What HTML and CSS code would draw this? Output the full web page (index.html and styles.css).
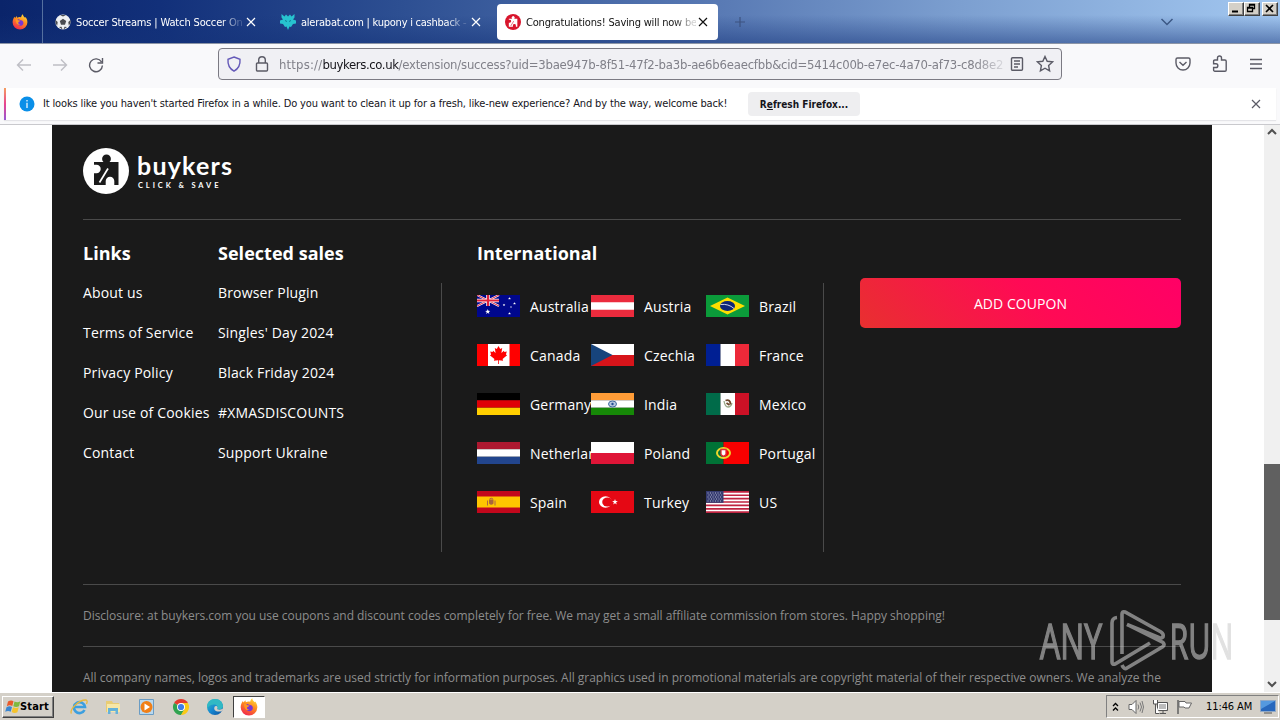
FILE: index.html
```html
<!DOCTYPE html>
<html lang="en">
<head>
<meta charset="utf-8">
<title>Congratulations! Saving will now be easier</title>
<link rel="stylesheet" href="styles.css">
</head>
<body>
<svg width="0" height="0" class="defs">
  <defs>
    <linearGradient id="fox" x1="0.8" y1="0" x2="0.3" y2="1"><stop offset="0" stop-color="#ffe03a"/><stop offset=".45" stop-color="#ff8a1e"/><stop offset="1" stop-color="#f0254f"/></linearGradient>
    <linearGradient id="edge" x1="0" y1="0" x2="1" y2="1"><stop offset="0" stop-color="#39c6b4"/><stop offset=".5" stop-color="#1688d2"/><stop offset="1" stop-color="#0c4f9c"/></linearGradient>
    <symbol id="firefox" viewBox="0 0 16 16">
      <path d="M8 15.6A7.3 7.3 0 0 1 .6 8.3C.6 6 1.5 4 2.6 2.7l.5 1.4L4.8 2l.4 1.8C6.600 2.900 8 2.900 9 3.400 9.300 2 9.900 1 10.900.300c.1 1.700 1 2.400 2.200 3.500l.4-.8c1.300 1.600 2 3.400 1.900 5.500A7.400 7.400 0 0 1 8 15.600z" fill="url(#fox)"/>
      <path d="M5.200 5.800c1-.7 2-.5 2.800.1l2 .5c1.700 1 1.900 3.300.6 4.500-1.500 1.400-4.300 1-5.300-.8-.8-1.300-.8-3-.1-4.300z" fill="#7a35d5"/>
      <path d="M3.500 5.500c1.200-.5 2.500.1 3.200.9l1.700.2c-.2 1-1.500 1-2.100 1.600-.3 1.400.7 2.200 2.100 2-2 1.600-4.600.2-4.900-4.700z" fill="#ff9822"/>
    </symbol>
    <symbol id="cross" viewBox="0 0 10 10"><path d="M1 1l8 8M9 1L1 9" fill="none" stroke="currentColor" stroke-width="1.200"/></symbol>
    <symbol id="star" viewBox="-5 -5 10 10"><path d="M0-5L1.200-1.600 4.800-1.500 1.900.600 2.900 4 0 2-2.900 4-1.900.600-4.800-1.500-1.200-1.600z"/></symbol>
    <symbol id="puzzle" viewBox="0 0 46 46">
      <path d="M11 14h9.500a4.400 4.400 0 1 1 6 0H35.500V37h-4.200v-4a4.300 4.300 0 0 0-8.600 0v4H11V25.200h2.500a4.200 4.200 0 1 0 0-8.400H11z" fill="var(--ink)"/>
      <path d="M16.500 34.500L25 20.500" stroke="var(--paper)" stroke-width="1.700"/>
    </symbol>
  </defs>
</svg>
<div class="screen">
  <header class="tabs">
    <div class="home"><svg width="16" height="16"><use href="#firefox"/></svg></div>
    <div class="tab">
      <svg class="fav" width="16" height="16" viewBox="0 0 16 16"><circle cx="8" cy="8" r="7.600" fill="#eef0f2"/><path d="M8 4.800l3.200 2.300L10 10.700H6L4.800 7.100zM5 .900L8 2.600 11 .900zM.500 6l2.200 2-.5 3.500C.500 10 .300 8 .500 6zM15.500 6l-2.200 2 .5 3.500c1.700-1.500 1.900-3.500 1.700-5.500zM4 13l2.500-.3L7.500 15.500zM12 13l-2.500-.3L8.500 15.500z" fill="#4a4c50"/></svg>
      <span class="title">Soccer Streams | Watch Soccer On</span>
      <svg class="x" width="10" height="10"><use href="#cross"/></svg>
    </div>
    <div class="tab">
      <svg class="fav" width="16" height="16" viewBox="0 0 16 16"><path d="M1.500 0l3 2.500L6 .500 8 2.500l2-2 1.500 2 3-2.500v3.500L13 5.500l3 1v3l-3 .5-2 3-1.500-.5L8 16l-1.500-3.500L5 13l-2-3-3-.5v-3l3-1-1.500-2z" fill="#27c3cf"/><path d="M5 6.500l2 1M11 6.500l-2 1" stroke="#0e7f96"/></svg>
      <span class="title t2">alerabat.com | kupony i cashback -</span>
      <svg class="x" width="10" height="10"><use href="#cross"/></svg>
    </div>
    <div class="tab active">
      <svg class="fav brand" width="16" height="16" viewBox="0 0 46 46"><circle cx="23" cy="23" r="23" fill="#d8152c"/><use href="#puzzle" width="46" height="46"/></svg>
      <span class="title t3">Congratulations! Saving will now be</span>
      <svg class="x" width="10" height="10"><use href="#cross"/></svg>
    </div>
    <svg class="plus" width="12" height="12" viewBox="0 0 12 12"><path d="M6 1v10M1 6h10" stroke="#3d5380" stroke-width="1.200"/></svg>
    <svg class="chev" width="14" height="8" viewBox="0 0 14 8"><path d="M1.500 1L7 6.500 12.500 1" fill="none" stroke="#3c5885" stroke-width="1.500"/></svg>
    <div class="winbtns">
      <i><svg width="13" height="11" viewBox="0 0 13 11"><path d="M3 8.500h6" stroke="#000" stroke-width="2"/></svg></i>
      <i><svg width="13" height="11" viewBox="0 0 13 11"><path d="M4.500 4V1.500h5v4H8M4 2h6M2.500 4.500h5v4h-5zM2 5h6" fill="none" stroke="#000" stroke-width="1.300"/></svg></i>
      <i class="gap"><svg width="13" height="11" viewBox="0 0 13 11"><path d="M3 2l7 7M10 2L3 9" stroke="#000" stroke-width="1.600"/></svg></i>
    </div>
  </header>
  <nav class="toolbar">
    <div class="navbtns">
      <svg width="16" height="16" viewBox="0 0 16 16" class="dim"><path d="M15 8H1.500M7 2.500L1.500 8 7 13.500"/></svg>
      <svg width="16" height="16" viewBox="0 0 16 16" class="dim"><path d="M1 8h13.500M9 2.500L14.500 8 9 13.500"/></svg>
      <svg width="16" height="16" viewBox="0 0 16 16"><path d="M13.500 5A6.400 6.400 0 1 0 14.400 8.500M14.500 1v5H9.500"/></svg>
    </div>
    <div class="urlbar">
      <svg width="16" height="16" viewBox="0 0 16 16" class="shield"><path d="M8 1L14 3.300C14.500 9 12 13 8 15.200 4 13 1.500 9 2 3.300z"/></svg>
      <svg width="14" height="16" viewBox="0 0 14 16" class="lock"><path d="M2.500 7h9a1 1 0 0 1 1 1v6a1 1 0 0 1-1 1h-9a1 1 0 0 1-1-1V8a1 1 0 0 1 1-1zM3.700 7V4a3.300 3.300 0 0 1 6.600 0v3"/></svg>
      <span class="url"><span class="u1">https://</span><b>buykers.co.uk</b><span class="u2">/extension/success?uid=3bae947b-8f51-47f2-ba3b-ae6b6eaecfbb&amp;cid=5414c00b-e7ec-4a70-af73-c8d8e2</span></span>
      <svg width="14" height="16" viewBox="0 0 14 16" class="reader"><path d="M2.500 1.700h9a1 1 0 0 1 1 1v10.600a1 1 0 0 1-1 1h-9a1 1 0 0 1-1-1V2.700a1 1 0 0 1 1-1zM4 5h6M4 8h6M4 11h4"/></svg>
      <svg width="18" height="18" viewBox="0 0 18 18" class="fave"><path d="M9 1.500l2.200 4.800 5.300.6-3.900 3.600 1 5.300L9 13.200l-4.600 2.600 1-5.300L1.500 6.900l5.300-.6z"/></svg>
    </div>
    <div class="actions">
      <svg width="16" height="16" viewBox="0 0 16 16"><path d="M2.500 2h11a1.500 1.500 0 0 1 1.500 1.500V7A7 7 0 0 1 1 7V3.500A1.500 1.500 0 0 1 2.500 2zM4.500 6L8 9.300 11.500 6"/></svg>
      <svg width="16" height="18" viewBox="0 0 16 18"><path d="M5.500 5V3a2 2 0 0 1 4 0v2H13a1.200 1.200 0 0 1 1.200 1.200V15a1.200 1.200 0 0 1-1.200 1.200H2.800A1.200 1.200 0 0 1 1.600 15v-2.500H4a1.800 1.800 0 0 0 0-3.700H1.600V6.200A1.200 1.200 0 0 1 2.800 5z"/></svg>
      <svg width="14" height="14" viewBox="0 0 14 14"><path d="M1 2.500h12M1 7h12M1 11.500h12"/></svg>
    </div>
  </nav>
  <div class="notice">
    <div class="card">
      <svg width="16" height="16" viewBox="0 0 16 16"><circle cx="8" cy="8" r="7.500" fill="#0a8fe8"/><path d="M8 6.800V12M8 4v1.500" stroke="#fff" stroke-width="1.200"/></svg>
      <span class="msg">It looks like you haven't started Firefox in a while. Do you want to clean it up for a fresh, like-new experience? And by the way, welcome back!</span>
      <button><span>R<u>e</u>fresh Firefox...</span></button>
      <svg class="x" width="10" height="10"><use href="#cross"/></svg>
    </div>
  </div>
  <main>
    <div class="footer">
      <div class="logo">
        <svg width="46" height="46" viewBox="0 0 46 46"><circle cx="23" cy="23" r="23" fill="#fff"/><use href="#puzzle" width="46" height="46"/></svg>
        <div><strong>buykers</strong><small>CLICK &amp; SAVE</small></div>
      </div>
      <div class="columns">
        <section class="left">
          <div class="links"><h3>Links</h3><a>About us</a><a>Terms of Service</a><a>Privacy Policy</a><a>Our use of Cookies</a><a>Contact</a></div>
          <div class="links"><h3>Selected sales</h3><a>Browser Plugin</a><a>Singles' Day 2024</a><a>Black Friday 2024</a><a>#XMASDISCOUNTS</a><a>Support Ukraine</a></div>
        </section>
        <section class="intl">
          <h3>International</h3>
          <div class="flags">
            <a><svg viewBox="0 0 43 22"><path fill="#00078c" d="M0 0h43v22H0z"/><path d="M0 0l22 11M22 0L0 11" stroke="#fff" stroke-width="2"/><path d="M0 0l22 11M22 0L0 11" stroke="#e2213d"/><path d="M11 0v11M0 5.500h22" stroke="#fff" stroke-width="3.600"/><path d="M11 0v11M0 5.500h22" stroke="#e2213d" stroke-width="2.200"/><g fill="#fff"><use href="#star" x="8" y="14" width="5.500" height="5.500"/><use href="#star" x="31" y="2" width="3" height="3"/><use href="#star" x="25.500" y="8.500" width="3" height="3"/><use href="#star" x="36" y="7" width="3" height="3"/><use href="#star" x="31" y="17" width="3" height="3"/><circle cx="34" cy="12" r=".7"/></g></svg>Australia</a>
            <a><svg viewBox="0 0 43 22"><path fill="#eb2b3d" d="M0 0h43v22H0z"/><path fill="#fff" d="M0 7.300h43v7.400H0z"/></svg>Austria</a>
            <a><svg viewBox="0 0 43 22"><path fill="#0b9b3a" d="M0 0h43v22H0z"/><path fill="#fedf00" d="M21.500 2.500L39 11 21.500 19.500 4 11z"/><ellipse cx="21.500" cy="11" rx="7.500" ry="5" fill="#0c2678"/><path d="M14.500 9.500q8-1 13.500 4" fill="none" stroke="#fff" stroke-width=".8"/></svg>Brazil</a>
            <a><svg viewBox="0 0 43 22"><path fill="#f00" d="M0 0h43v22H0z"/><path fill="#fff" d="M11 0h21.500v22H11z"/><path fill="#f00" d="M21.500 2l1.700 3 2-1-.8 5 2.500-2.300.5 1.300 2.400-.4-.9 2.900 1.200.7-4.500 3.700.5 1.900-4.200-.6V20h-.8v-3.800l-4.200.6.500-1.900-4.500-3.700 1.200-.7-.9-2.900 2.400.4.500-1.300L18.600 9l-.8-5 2 1z"/></svg>Canada</a>
            <a><svg viewBox="0 0 43 22"><path fill="#fff" d="M0 0h43v11H0z"/><path fill="#d7141a" d="M0 11h43v11H0z"/><path fill="#17447c" d="M0 0l21.500 11L0 22z"/></svg>Czechia</a>
            <a><svg viewBox="0 0 43 22"><path fill="#001f93" d="M0 0h14.500v22H0z"/><path fill="#fff" d="M14.500 0H29v22H14.500z"/><path fill="#ed2939" d="M29 0h14v22H29z"/></svg>France</a>
            <a><svg viewBox="0 0 43 22"><path fill="#000" d="M0 0h43v7.300H0z"/><path fill="#df0007" d="M0 7.300h43v7.400H0z"/><path fill="#ffcf00" d="M0 14.700h43V22H0z"/></svg>Germany</a>
            <a><svg viewBox="0 0 43 22"><path fill="#ff9c37" d="M0 0h43v7.300H0z"/><path fill="#fff" d="M0 7.300h43v7.400H0z"/><path fill="#168807" d="M0 14.700h43V22H0z"/><ellipse cx="21.500" cy="11" rx="4" ry="3" fill="#b6c7df" stroke="#426ca1"/><circle cx="21.500" cy="11" r="1.200" fill="#224f91"/></svg>India</a>
            <a><svg viewBox="0 0 43 22"><path fill="#006b49" d="M0 0h14.500v22H0z"/><path fill="#fff" d="M14.500 0H29v22H14.500z"/><path fill="#cc1126" d="M29 0h14v22H29z"/><path d="M18 8q1 6 4 6t4-4" fill="none" stroke="#9aa888" stroke-width="1.300"/><path d="M19.500 7.500q5-1.500 5 4M20.500 10l3 2" fill="none" stroke="#6e492d" stroke-width="1.800"/></svg>Mexico</a>
            <a><svg viewBox="0 0 43 22"><path fill="#ad1830" d="M0 0h43v7.300H0z"/><path fill="#fff" d="M0 7.300h43v7.400H0z"/><path fill="#22458d" d="M0 14.700h43V22H0z"/></svg>Netherlands</a>
            <a><svg viewBox="0 0 43 22"><path fill="#fff" d="M0 0h43v11H0z"/><path fill="#df1537" d="M0 11h43v11H0z"/></svg>Poland</a>
            <a><svg viewBox="0 0 43 22"><path fill="#007236" d="M0 0h17.500v22H0z"/><path fill="#f80000" d="M17.500 0H43v22H17.500z"/><ellipse cx="17.500" cy="11" rx="6.500" ry="5" fill="none" stroke="#e9d62b" stroke-width="2"/><path d="M15 7.500h5v5q-2.500 3.500-5 0z" fill="#fff" stroke="#e02a35" stroke-width="1.300"/></svg>Portugal</a>
            <a><svg viewBox="0 0 43 22"><path fill="#c2071c" d="M0 0h43v22H0z"/><path fill="#ffc500" d="M0 5.500h43v11H0z"/><path fill="#a9643c" d="M12 8.500h4.500v4q-2.300 2.500-4.500 0z"/><path d="M10.500 9.500v5M18 9.500v5M12.500 8q1.800-1.500 3.500 0" fill="none" stroke="#ad6546"/></svg>Spain</a>
            <a><svg viewBox="0 0 43 22"><path fill="#e50814" d="M0 0h43v22H0z"/><ellipse cx="14.500" cy="11" rx="6.500" ry="5.700" fill="#fff"/><ellipse cx="16.500" cy="11" rx="5.300" ry="4.500" fill="#e50814"/><use href="#star" x="21" y="8" width="6" height="6" fill="#fff"/></svg>Turkey</a>
            <a><svg viewBox="0 0 43 22"><path fill="#fff" d="M0 0h43v22H0z"/><path d="M0 .850h43M0 4.230h43M0 7.610h43M0 11h43M0 14.400h43M0 17.800h43M0 21.150h43" stroke="#bf2340" stroke-width="1.700"/><path fill="#353b70" d="M0 0h17.500v11.850H0z"/><path d="M1.500 2h15M2.500 4h13M1.500 6h15M2.500 8h13M1.500 10h15" stroke="#c1c3d7" stroke-width=".9" stroke-dasharray="1 1.500"/></svg>US</a>
          </div>
        </section>
        <section class="cta"><a>ADD COUPON</a></section>
      </div>
      <p class="disc">Disclosure: at buykers.com you use coupons and discount codes completely for free. We may get a small affiliate commission from stores. Happy shopping!</p>
      <p class="legal">All company names, logos and trademarks are used strictly for information purposes. All graphics used in promotional materials are copyright material of their respective owners. We analyze the</p>
    </div>
    <div class="scroll">
      <svg width="10" height="8" viewBox="0 0 10 8"><path d="M1 6l4-4 4 4" fill="none" stroke="#505050" stroke-width="2"/></svg>
      <i></i>
      <svg width="10" height="8" viewBox="0 0 10 8"><path d="M1 2l4 4 4-4" fill="none" stroke="#505050" stroke-width="2"/></svg>
    </div>
  </main>
  <footer class="taskbar">
    <div class="start"><svg width="17" height="16" viewBox="0 0 17 16"><path d="M3 2.500q3-2 5.500-.3L7.300 7q-2.500-1.500-5.500.2z" fill="#e95a2b"/><path d="M9.500 2.500q3 1.500 5.800-.2L14 7.200q-3 1.500-5.700 0z" fill="#7fb83f"/><path d="M1.500 8.200q3-1.700 5.500-.2l-1.300 4.700q-2.500-1.500-5.500 0z" fill="#3a86d1"/><path d="M8 8.300q3 1.500 5.700 0l-1.300 4.900q-3 1.500-5.700-.2z" fill="#f5c32c"/></svg><b>Start</b></div>
    <div class="apps">
      <svg width="18" height="18" viewBox="0 0 18 18"><path d="M14.500 12A5.500 5.500 0 1 1 15 9H5" fill="none" stroke="#3c9fdf" stroke-width="2.600"/><path d="M1.500 15.500C-1 12 9 1.500 16 2q2 .5.500 4" fill="none" stroke="#e8b83b" stroke-width="1.300"/></svg>
      <svg width="18" height="18" viewBox="0 0 18 18"><path d="M2 3h6l1 2h6v9H2z" fill="#e8cc74"/><path d="M3 6h13v8H3z" fill="#f7e7a6"/><path d="M4 10h10v6h-2.500v-3h-5v3H4z" fill="#65b2d9"/></svg>
      <svg width="18" height="18" viewBox="0 0 18 18"><path fill="#b9d8ee" stroke="#6a9cc4" d="M1.500 1.500h14v15h-14z"/><circle cx="8.500" cy="9" r="6" fill="#f07f17"/><path d="M6.500 5.500L12 9l-5.500 3.500z" fill="#fff"/></svg>
      <svg width="18" height="18" viewBox="0 0 18 18"><path d="M9 9L2.070 5A8 8 0 0 1 15.930 5z" fill="#e33b2e"/><path d="M9 9L2.070 5A8 8 0 0 0 9 17l4-6z" fill="#31a350"/><path d="M9 5h6.930A8 8 0 0 1 9 17l3.500-6z" fill="#fbc916"/><circle cx="9" cy="9" r="4" fill="#fff"/><circle cx="9" cy="9" r="3.100" fill="#3f7de8"/></svg>
      <svg width="18" height="18" viewBox="0 0 18 18"><circle cx="9" cy="9" r="8" fill="url(#edge)"/><path d="M17 8.500c0 3-4.500 3.700-6 2.500 1.500-2 0-4.500-3-4.500-3 0-5.500 1.800-6.900 3.500C.500 4 5 1 9 1c5 0 8 3.500 8 7.500z" fill="#31b9c4"/><path d="M8.500 9c-1.200 3 1.500 5.500 7 4.300l1.500-1.800v-1c-1.500 1.300-4.500 1.500-6 .5 1-1.500.5-2.500-.5-3-1 0-1.700.3-2 1z" fill="#d4d0c8"/></svg>
      <div class="running"><svg width="18" height="18"><use href="#firefox"/></svg></div>
    </div>
    <div class="tray">
      <svg width="7" height="10" viewBox="0 0 7 10"><path d="M1 4l2.500-2.500L6 4M1 8.500L3.500 6 6 8.500" fill="none" stroke="#000" stroke-width="1.300"/></svg>
      <svg width="16" height="16" viewBox="0 0 16 16"><path d="M1 5.500h3L8 1.500v13l-4-4H1z" fill="#fff" stroke="#666"/><path d="M10 5.500q1.500 2.500 0 5M12 3.500q3 4.500 0 9M14 2q3 6 0 12" fill="none" stroke="#777"/></svg>
      <svg width="16" height="16" viewBox="0 0 16 16"><path d="M5.500 3.500h10v8h-10zM8 14.500h6M11 11.500v3" fill="#bbb" stroke="#555"/><path d="M6.500 4.500h8v6h-8z" fill="none" stroke="#fff"/><path d="M1.500 1v4h4V1M3.500 5v9.500h4" fill="#fff" stroke="#555"/></svg>
      <svg width="16" height="16" viewBox="0 0 16 16"><path d="M2 1v14" stroke="#666" stroke-width="1.600"/><path d="M3 2.500h6l1 1.500h5.500L13 9H9L8 8H3z" fill="#fff" stroke="#666"/></svg>
      <span>11:46 AM</span>
      <svg class="desk" width="16" height="14" viewBox="0 0 16 14"><path fill="#2868bd" stroke="#90a9c7" d="M.5.500h15v11H.500z"/><path d="M1 1h14L1 9z" fill="#5599df"/><path d="M4 13h8" stroke="#555"/></svg>
    </div>
  </footer>
  <svg class="watermark" width="200" height="70" viewBox="0 0 200 70">
    <text x="3" y="54.500" textLength="62" lengthAdjust="spacingAndGlyphs">ANY</text>
    <text x="132.500" y="54.500" textLength="64" lengthAdjust="spacingAndGlyphs">RUN</text>
    <path d="M80 13.500Q75 14 75 19v39q0 3 3 2l35-21M85 50V10q0-3 3-2l36 20q3 2 2 5-2 2-5 0L90 20.500l36 18q2 2 0 4L90 64q-3 2-5-3"/>
  </svg>
</div>
</body>
</html>
```
FILE: styles.css
```css
* { box-sizing: border-box; }
body { margin: 0; font-family: "DejaVu Sans Condensed", "DejaVu Sans", sans-serif; font-size: 11px; color: #15141a; }
.defs { position: absolute; }
svg { display: block; flex: none; }
.screen { position: relative; width: 1280px; height: 720px; display: flex; flex-direction: column; overflow: hidden; background: #fff; }

.tabs { height: 44px; flex: none; display: flex; align-items: center; color: #fff; border-bottom: 1px solid #8c95a6; background: linear-gradient(180deg, rgba(20,50,120,0) 35%, rgba(20,50,120,.5) 100%), linear-gradient(90deg, #0a246a 0, #12307a 160px, #2d4f92 400px, #5677b2 700px, #7c9fd0 960px, #a2c7f0 1280px); }
.home { width: 43px; height: 43px; padding: 14px 0 0 12px; border-right: 1px solid #55709f; }
.tab { width: 221px; height: 36px; margin: 0 2px; padding: 0 10px; display: flex; align-items: center; }
.tab .x { margin-left: 3px; }
.fav { margin-right: 5px; }
.title { width: 170px; white-space: nowrap; padding-top: 2px; letter-spacing: -.15px; mask-image: linear-gradient(90deg, #000 87%, rgba(0,0,0,.2) 98%); }
.t2 { letter-spacing: -.24px; }
.t3 { letter-spacing: -.2px; }
.tab.active { margin-left: 4px; padding-left: 8px; background: #fff; color: #111; border-radius: 4px; }
.tab.active .x { margin-left: 2px; }
.brand { --ink: #fff; --paper: #d8152c; }
.plus { margin-left: 14px; }
.chev { margin-left: 414px; }
.winbtns { align-self: flex-start; margin: 2px 2px 0 auto; display: flex; }
.winbtns i { width: 16px; height: 14px; background: #d4d0c8; border: 1px solid; border-color: #fff #404040 #404040 #fff; box-shadow: inset -1px -1px #808080; }
.winbtns .gap { margin-left: 2px; }

.toolbar { height: 44px; flex: none; padding: 4px 17px 0 16px; display: flex; align-items: flex-start; background: #f9f9fb; }
.toolbar svg { fill: none; stroke: #5b5b66; stroke-width: 1.4; }
.navbtns { display: flex; gap: 20px; padding-top: 9px; width: 202px; }
.toolbar .dim { stroke: #bfbfc5; }
.urlbar { width: 844px; height: 32px; border: 1px solid #7b7a83; border-radius: 4px; background: #f0f0f4; display: flex; align-items: center; padding: 0 7px; }
.toolbar .shield { stroke: #6459b8; }
.lock { margin-left: 13px; }
.url { width: 726px; margin-left: 10px; display: block; white-space: nowrap; font-size: 13px; color: #808089; mask-image: linear-gradient(90deg, #000 96%, rgba(0,0,0,.2) 100%); }
.url b { font-weight: 400; color: #15141a; letter-spacing: -.38px; }
.u1 { letter-spacing: .18px; }
.u2 { letter-spacing: -.22px; }
.reader { margin-left: 7px; }
.fave { margin-left: 12px; }
.actions { display: flex; align-items: center; gap: 21px; margin-left: auto; padding-top: 7px; }

.notice { height: 37px; flex: none; padding: 0 4px; background: #f9f9fb; border-bottom: 1px solid #c9c9cd; }
.card { height: 32px; display: flex; align-items: center; padding: 0 15px 0 13px; background: #fff; border-left: 2px solid; border-image: linear-gradient(#f6a45c, #e8438f, #9059d8) 1; box-shadow: 0 1px 1px #e4e4e8; }
.msg { width: 686px; margin-left: 8px; padding-bottom: 2px; white-space: nowrap; letter-spacing: -.144px; }
.card button { width: 112px; height: 24px; margin-left: 19px; padding: 0; border: 0; border-radius: 4px; background: #eeeef0; font: bold 10px "DejaVu Sans Condensed", sans-serif; color: #15141a; }
.card .x { margin-left: auto; color: #5b5b66; }

main { flex: 1; min-height: 0; display: flex; background: #fff; }
.footer { width: 1160px; margin-left: 52px; padding: 23px 31px 0; overflow: hidden; background: #1a1a1a; color: #fff; font-family: "Open Sans", sans-serif; font-size: 14px; letter-spacing: .17px; }
.logo { height: 71px; display: flex; --ink: #1a1a1a; --paper: #fff; }
.logo div { padding: 2px 0 0 8px; }
.logo strong { display: block; font: 700 25px/30px Lato, sans-serif; letter-spacing: 1.200px; }
.logo small { display: block; font: 700 7.500px/9px Lato, sans-serif; letter-spacing: 2.900px; padding: 1px 0 0 1px; }
.columns { height: 365px; display: flex; border-top: 1px solid #4a4a4a; }
h3 { margin: 0; font-size: 18px; line-height: 24px; font-weight: 700; letter-spacing: .03px; }
.left { width: 358px; padding-top: 21px; display: flex; }
.links { width: 135px; display: flex; flex-direction: column; white-space: nowrap; }
.links a { line-height: 20px; margin-bottom: 20px; }
.links h3 { margin-bottom: 18px; }
.intl { width: 383px; padding: 21px 0 0 36px; background: linear-gradient(#4a4a4a, #4a4a4a) 0 63px / 1px 269px no-repeat, linear-gradient(#4a4a4a, #4a4a4a) 100% 63px / 1px 269px no-repeat; }
.flags { display: grid; grid-template-columns: 114px 115px 114px; grid-auto-rows: 22px; row-gap: 27px; padding-top: 30px; }
.flags a { display: flex; align-items: flex-start; line-height: 24px; white-space: nowrap; }
.flags a:nth-child(10) { overflow: hidden; }
.flags svg { width: 43px; height: 22px; margin-right: 10px; }
.cta { flex: 1; padding: 58px 0 0 36px; }
.cta a { display: flex; align-items: center; justify-content: center; height: 50px; border-radius: 5px; font-weight: 500; letter-spacing: .05px; background: linear-gradient(45deg, #e8302f 0, #ff0a55 55%, #ff0066 100%); }
p { margin: 0; font-size: 12px; line-height: 20px; color: #8d8d8d; border-top: 1px solid #4a4a4a; padding-top: 21px; height: 62px; white-space: nowrap; }
.disc { letter-spacing: -.03px; }
.legal { letter-spacing: -.014px; }

.scroll { width: 16px; margin-left: 52px; background: #f0f0f0; display: flex; flex-direction: column; align-items: center; padding: 3px 0 4px; }
.scroll i { width: 16px; height: 156px; margin: 328px 0 auto; background: #606060; }

.taskbar { height: 28px; flex: none; display: flex; align-items: center; background: #d4d0c8; border-top: 1px solid #fff; color: #000; }
.start { width: 52px; height: 22px; margin-left: 2px; display: flex; align-items: center; padding-left: 2px; border: 1px solid; border-color: #fff #404040 #404040 #fff; box-shadow: inset -1px -1px #808080; }
.start b { font-size: 11px; letter-spacing: .15px; margin-left: -2px; }
.apps { display: flex; align-items: center; margin-left: 16px; gap: 16px; }
.running { width: 32px; height: 22px; margin-left: -7px; padding: 1px 6px; background: #fff; border: 1px solid; border-color: #404040 #fff #fff #404040; }
.tray { height: 23px; width: 173px; margin: 0 1px 0 auto; display: flex; align-items: center; padding-left: 5px; border: 1px solid; border-color: #808080 #fff #fff #808080; }
.tray svg + svg { margin-left: 8px; }
.tray svg:first-child + svg { margin-left: 9px; }
.tray span { margin-left: 14px; width: 47px; white-space: nowrap; letter-spacing: -.1px; }
.tray .desk { margin-left: 7px; }

.watermark { position: absolute; left: 1037px; top: 604px; fill: none; stroke: rgba(205,205,205,.585); stroke-width: 3.6; }
.watermark text { font: 400 50px "Open Sans", sans-serif; fill: rgb(205,205,205); stroke: rgb(205,205,205); stroke-width: 1.600; opacity: .585; }
```
